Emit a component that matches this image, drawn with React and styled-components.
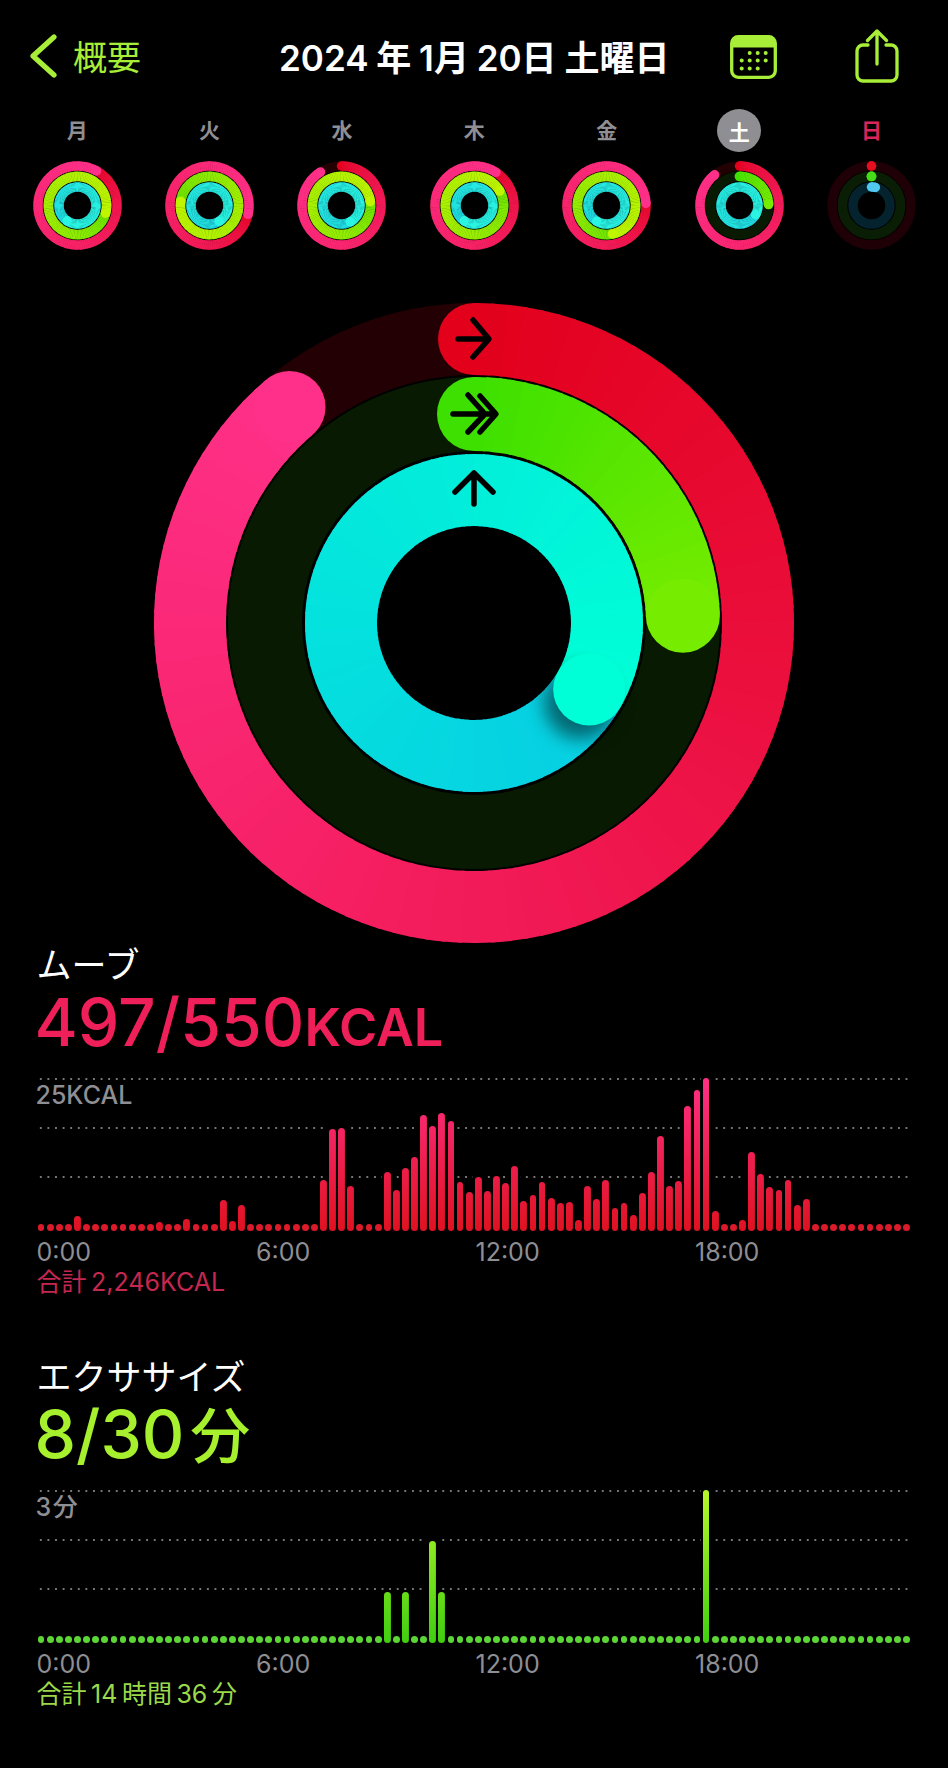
import styled, { createGlobalStyle } from "styled-components";

const FONT = `Inter, "Noto Sans CJK JP", sans-serif`;
const LIME = "#a8ee38";

const GlobalStyle = createGlobalStyle`
  body {
    margin: 0;
    background: #000;
  }
`;

// リングの色
const HERO = {
  red: { from: "#e2001b", to: "#ff3089", track: "#220003" },
  green: { from: "#3de000", to: "#76ec00", track: "#081b02" },
  cyan: { from: "#07cde3", to: "#00ffd6", track: "#04222e" },
};
const WEEK = {
  red: HERO.red,
  green: { from: "#58e000", to: "#c0f500", track: "#081b02" },
  cyan: { from: "#1cd4e4", to: "#2af5e2", track: "#04222e" },
};
const SATURDAY = { ...HERO, cyan: WEEK.cyan };
const SUNDAY = {
  red: { from: "#e50f20", to: "#e50f20", track: "#1e0006" },
  green: { from: "#44dd18", to: "#44dd18", track: "#0a1e05" },
  cyan: { from: "#50c8f0", to: "#50c8f0", track: "#04232e" },
};

const days = [
  { name: "月", red: 389, green: 465, cyan: 574, palette: WEEK },
  { name: "火", red: 463, green: 638, cyan: 509, palette: WEEK },
  { name: "水", red: 328, green: 442, cyan: 512, palette: WEEK },
  { name: "木", red: 393, green: 420, cyan: 574, palette: WEEK },
  { name: "金", red: 447, green: 528, cyan: 572, palette: WEEK },
  { name: "土", red: 321, green: 88, cyan: 480, palette: SATURDAY, selected: true },
  { name: "日", red: 0, green: 0, cyan: 12, palette: SUNDAY, sunday: true },
];

// 15分ごとの棒の高さ (px)
const moveBars = {
  4: 15, 13: 9, 16: 12, 20: 31, 21: 10, 22: 26, 31: 51, 32: 102, 33: 103, 34: 45,
  38: 59, 39: 41, 40: 63, 41: 74, 42: 116, 43: 105, 44: 118, 45: 110, 46: 49, 47: 39,
  48: 54, 49: 40, 50: 55, 51: 48, 52: 65, 53: 30, 54: 36, 55: 49, 56: 33, 57: 28,
  58: 29, 59: 11, 60: 45, 61: 32, 62: 51, 63: 23, 64: 28, 65: 16, 66: 38, 67: 59,
  68: 95, 69: 45, 70: 50, 71: 125, 72: 141, 73: 153, 74: 20, 77: 11, 78: 79, 79: 57,
  80: 44, 81: 41, 82: 51, 83: 26, 84: 32,
};
const exerciseBars = { 38: 51, 40: 51, 43: 102, 44: 51, 73: 153 };

const hexToRgb = (hex) => [1, 3, 5].map((i) => parseInt(hex.slice(i, i + 2), 16));

const mix = (a, b, t) => {
  const ca = hexToRgb(a);
  const cb = hexToRgb(b);
  return `rgb(${ca.map((v, i) => Math.round(v + (cb[i] - v) * t)).join(",")})`;
};

const polar = (r, deg) => {
  const a = ((deg - 90) * Math.PI) / 180;
  return [r * Math.cos(a), r * Math.sin(a)];
};

const RingArc = ({ r, w, colors, total, shadow, ease = 1 }) => {
  const span = Math.min(total, 360);
  const begin = total - span;
  const count = Math.ceil(span / 3);
  const segments = [];
  for (let i = 0; i < count; i++) {
    const a0 = begin + (span * i) / count;
    const a1 = Math.min(begin + (span * (i + 1)) / count + 0.7, total);
    const [x0, y0] = polar(r, a0);
    const [x1, y1] = polar(r, a1);
    segments.push(
      <path
        key={i}
        d={`M${x0} ${y0}A${r} ${r} 0 0 1 ${x1} ${y1}`}
        fill="none"
        stroke={mix(colors.from, colors.to, Math.pow((i + 0.5) / count, ease))}
        strokeWidth={w}
      />
    );
  }
  const [sx, sy] = polar(r, 0);
  const [ex, ey] = polar(r, total);
  const [fx, fy] = polar(r, total + 7);
  return (
    <g>
      <circle r={r} fill="none" stroke={colors.track} strokeWidth={w} />
      {total < 360 && <circle cx={sx} cy={sy} r={w / 2} fill={colors.from} />}
      {segments}
      {shadow && total >= 360 && <CapShadow cx={fx} cy={fy} r={w / 2} />}
      <circle cx={ex} cy={ey} r={w / 2} fill={colors.to} />
    </g>
  );
};

const Rings = ({ size, width, red, green, cyan, palette, shadow, ease, children }) => (
  <RingSvg $size={size} viewBox="-320 -320 640 640">
    <RingArc r={284} w={width} colors={palette.red} total={red} shadow={shadow} ease={ease} />
    <RingArc r={209} w={width + 2} colors={palette.green} total={green} shadow={shadow} ease={ease} />
    <RingArc r={133} w={width} colors={palette.cyan} total={cyan} shadow={shadow} ease={ease} />
    {children}
  </RingSvg>
);

const Chart = ({ bars, tone, scale }) => (
  <ChartGrid>
    <Rules>
      <Rule />
      <Rule />
      <Rule />
    </Rules>
    <ScaleLabel>{scale}</ScaleLabel>
    <Bars>
      {Array.from({ length: 96 }, (_, i) => (
        <Slot key={i}>
          <Bar $tone={tone} $dot={!bars[i]} style={{ height: bars[i] || 7 }} />
        </Slot>
      ))}
    </Bars>
  </ChartGrid>
);

const Axis = () => (
  <AxisRow>
    <span>0:00</span>
    <span>6:00</span>
    <span>12:00</span>
    <span>18:00</span>
  </AxisRow>
);

const App = () => {
  return (
    <Page>
      <GlobalStyle />
      <Nav>
        <Back>
          <svg width="28" height="44" viewBox="0 0 28 44">
            <path d="M24 3 3 22l21 19" fill="none" stroke={LIME} strokeWidth="5.2" strokeLinecap="round" strokeLinejoin="round" />
          </svg>
          <BackText>概要</BackText>
        </Back>
        <DateTitle>2024 年 1月 20日 土曜日</DateTitle>
        <CalendarIcon viewBox="0 0 47 44">
          <rect x="1.7" y="1.7" width="43.6" height="40.6" rx="6.5" fill="none" stroke={LIME} strokeWidth="3.3" />
          <path d="M1.7 12V8a6.5 6.5 0 0 1 6.5-6.5h30.6a6.5 6.5 0 0 1 6.5 6.500v4z" fill={LIME} stroke={LIME} />
          {[[19.7, 18], [27.7, 18], [35.7, 18], [11.7, 25.6], [19.7, 25.6], [27.7, 25.6], [35.7, 25.6], [11.7, 33.4], [19.7, 33.4], [27.7, 33.4]].map(([x, y]) => (
            <circle key={`${x}-${y}`} cx={x} cy={y} r="2" fill={LIME} />
          ))}
        </CalendarIcon>
        <ShareIcon viewBox="0 0 44 54">
          <path
            d="M13 16H8a6 6 0 0 0-6 6v24a6 6 0 0 0 6 6h28a6 6 0 0 0 6-6V22a6 6 0 0 0-6-6h-5"
            fill="none"
            stroke={LIME}
            strokeWidth="3.3"
            strokeLinecap="round"
          />
          <path d="M22 2v33M12.500 11.500 22 2l9.500 9.500" fill="none" stroke={LIME} strokeWidth="3.3" strokeLinecap="round" strokeLinejoin="round" />
        </ShareIcon>
      </Nav>

      <Week>
        {days.map((d) => (
          <Day key={d.name}>
            <DayLabel $selected={d.selected} $sunday={d.sunday}>
              {d.name}
            </DayLabel>
            <Rings size={89} width={68} red={d.red} green={d.green} cyan={d.cyan} palette={d.palette} ease={0.45} />
          </Day>
        ))}
      </Week>

      <Hero>
        <Rings size={640} width={72} red={319.5} green={88} cyan={480} palette={HERO} shadow>
          <Arrow d="M-16-284H14M-1-303 15-284-1-266" />
          <Arrow d="M-21-209H17M-6-228 11-209-6-191M6-227 22-209 6-191" />
          <Arrow d="M0-119V-149M-19-131 0-150 19-131" />
        </Rings>
      </Hero>

      <Section>
        <Title>ムーブ</Title>
        <Value $color="#ef1f59">
          497/550<Unit>KCAL</Unit>
        </Value>
        <Chart bars={moveBars} tone="red" scale="25KCAL" />
        <Axis />
        <Total $color="#c4274f">合計 2,246KCAL</Total>
      </Section>

      <ExerciseSection>
        <Title>エクササイズ</Title>
        <Value $color="#a6f02d">8/30{"\u200A"}<Kanji>分</Kanji></Value>
        <Chart bars={exerciseBars} tone="green" scale="3 分" />
        <Axis />
        <Total $color="#9bd94a">合計 14 時間 36 分</Total>
      </ExerciseSection>
    </Page>
  );
};

const barTones = {
  red: "linear-gradient(to top, #df1221, #ff2f85)",
  green: "linear-gradient(to top, #3fcf10, #b8f62a)",
};
const dotTones = { red: "#dd1a2a", green: "#5cd636" };

const Page = styled.div`
  width: 948px;
  height: 1768px;
  overflow: hidden;
  background: #000;
  font-family: ${FONT};
  color: #fff;
`;

const Nav = styled.header`
  height: 109px;
  padding: 2px 0 0 30px;
  box-sizing: border-box;
  display: flex;
  align-items: center;
`;

const Back = styled.div`
  width: 249px;
  display: flex;
  align-items: center;
  gap: 15px;
`;

const BackText = styled.span`
  font-size: 34px;
  color: ${LIME};
`;

const DateTitle = styled.h1`
  width: 451px;
  margin: 0;
  font-size: 35px;
  font-weight: 600;
  word-spacing: -1px;
  white-space: nowrap;
`;

const CalendarIcon = styled.svg`
  width: 47px;
  height: 44px;
  margin: 2px 78px 0 0;
`;

const ShareIcon = styled.svg`
  width: 44px;
  height: 54px;
`;

const Week = styled.section`
  padding-left: 11px;
  display: grid;
  grid-template-columns: repeat(7, 132.4px);
`;

const Day = styled.div`
  display: flex;
  flex-direction: column;
  align-items: center;
  gap: 9px;
`;

const DayLabel = styled.div`
  width: 44px;
  height: 43px;
  padding-bottom: ${(p) => (p.$selected ? 0 : 3)}px;
  box-sizing: border-box;
  border-radius: 50%;
  display: flex;
  align-items: center;
  justify-content: center;
  font-size: 21px;
  font-weight: 600;
  background: ${(p) => (p.$selected ? "#8e8e93" : "transparent")};
  color: ${(p) => (p.$selected ? "#fff" : p.$sunday ? "#d6265b" : "#8e8e93")};
`;

const RingSvg = styled.svg`
  display: block;
  width: ${(p) => p.$size}px;
  height: ${(p) => p.$size}px;
`;

const CapShadow = styled.circle`
  fill: #000;
  opacity: 0.5;
  filter: blur(9px);
`;

const Arrow = styled.path`
  fill: none;
  stroke: #000;
  stroke-width: 5.5;
  stroke-linecap: round;
  stroke-linejoin: round;
`;

const Hero = styled.div`
  padding-top: 53px;
  display: flex;
  justify-content: center;
`;

const Section = styled.section`
  padding: 4px 0 0 36.5px;
`;

const ExerciseSection = styled(Section)`
  padding-top: 63px;
`;

const Title = styled.h2`
  margin: 0;
  font-size: 35px;
  font-weight: 400;
  line-height: 37px;
`;

const Value = styled.div`
  height: 94px;
  margin-left: -2px;
  font-size: 66px;
  font-weight: 500;
  line-height: 76px;
  white-space: nowrap;
  color: ${(p) => p.$color};
`;

const Unit = styled.span`
  font-size: 52px;
  font-weight: 600;
`;

const Kanji = styled.span`
  font-size: 60px;
`;

const ChartGrid = styled.div`
  width: 875px;
  height: 153px;
  display: grid;

  & > * {
    grid-area: 1 / 1;
  }
`;

const Rules = styled.div`
  display: flex;
  flex-direction: column;
  gap: 47px;
`;

const Rule = styled.div`
  height: 2px;
  background-image: radial-gradient(circle, #787878 0.9px, transparent 1.3px);
  background-size: 7.6px 2px;
`;

const ScaleLabel = styled.div`
  align-self: start;
  margin: 4px 0 0 -1px;
  font-size: 25px;
  font-weight: 500;
  word-spacing: -5px;
  line-height: 26px;
  color: #8e8e93;
`;

const Bars = styled.div`
  display: flex;
  align-items: flex-end;
`;

const Slot = styled.div`
  width: 9.11px;
  flex: none;
  display: flex;
  justify-content: center;
`;

const Bar = styled.div`
  position: relative;
  width: 6.8px;

  &::before {
    content: "";
    position: absolute;
    inset: -2px;
    background: #000;
  }

  &::after {
    content: "";
    position: absolute;
    inset: 0;
    z-index: 1;
    border-radius: 4px;
    background: ${(p) => (p.$dot ? dotTones[p.$tone] : `${barTones[p.$tone]} bottom / 100% 153px no-repeat`)};
  }
`;

const AxisRow = styled.div`
  margin-top: 7px;
  display: grid;
  grid-template-columns: repeat(4, 219.5px);
  font-size: 25px;
  line-height: 28px;
  color: #8e8e93;
`;

const Total = styled.div`
  margin-top: 2px;
  font-size: 25px;
  word-spacing: -2.5px;
  line-height: 28px;
  color: ${(p) => p.$color};
`;

export default App;
